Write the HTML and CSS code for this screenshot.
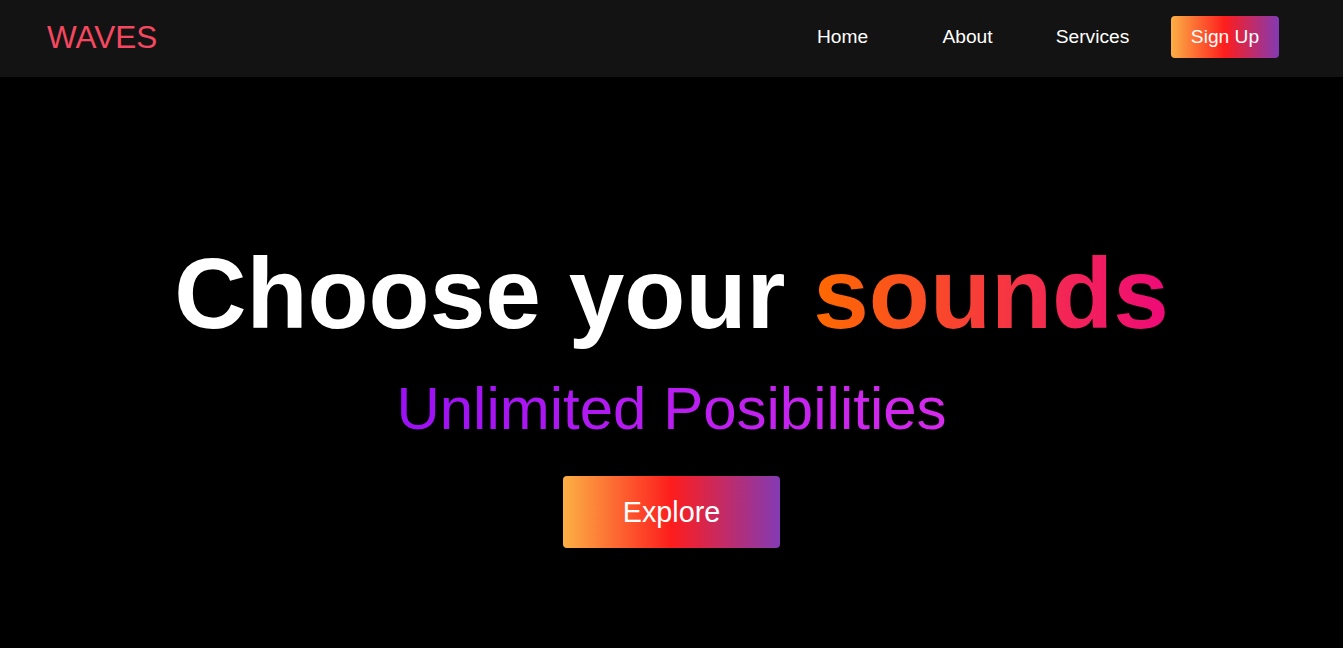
FILE: index.html
```html
<!DOCTYPE html>
<html lang="en">
<head>
<meta charset="utf-8">
<title>Waves</title>
<link rel="stylesheet" href="styles.css">
</head>
<body>
<header class="navbar">
  <div class="logo">WAVES</div>
  <nav class="nav">
    <a class="nav-link" href="#">Home</a>
    <a class="nav-link" href="#">About</a>
    <a class="nav-link" href="#">Services</a>
    <a class="btn btn-signup" href="#">Sign Up</a>
  </nav>
</header>
<main class="hero">
  <h1 class="hero-title">Choose your <span class="accent">sounds</span></h1>
  <h2 class="hero-sub">Unlimited Posibilities</h2>
  <a class="btn btn-explore" href="#">Explore</a>
</main>
</body>
</html>
```

FILE: styles.css
```css
* { box-sizing: border-box; margin: 0; padding: 0; }

html, body {
  height: 100%;
}

body {
  background: #000;
  font-family: "Liberation Sans", Arial, sans-serif;
  color: #fff;
  overflow: hidden;
}

.navbar {
  height: 77px;
  background: #131313;
  display: flex;
  align-items: center;
  justify-content: space-between;
  padding: 0 64px 0 47px;
}

.logo {
  font-size: 31.5px;
  color: #f5475f;
  padding-bottom: 2px;
}

.nav {
  display: flex;
  align-items: center;
}

.nav-link {
  width: 125px;
  text-align: center;
  color: #fff;
  text-decoration: none;
  font-size: 19.2px;
  padding-bottom: 4px;
}

.btn {
  display: flex;
  align-items: center;
  justify-content: center;
  color: #fff;
  text-decoration: none;
  background: linear-gradient(to right, #fcb045, #fd1d1d, #833ab4);
  border-radius: 4px;
}

.btn-signup {
  margin-left: 16px;
  margin-bottom: 4px;
  width: 108px;
  height: 42px;
  font-size: 19.2px;
  padding-bottom: 0;
}

.hero {
  display: flex;
  flex-direction: column;
  align-items: center;
  padding-top: 156px;
}

.hero-title {
  font-size: 100px;
  line-height: 120px;
  font-weight: 700;
  color: #fff;
}

.accent {
  background: linear-gradient(to right, #ff6a00, #ee0979);
  -webkit-background-clip: text;
  background-clip: text;
  color: transparent;
}

.hero-sub {
  margin-top: 20px;
  font-size: 60px;
  line-height: 72px;
  font-weight: 400;
  background: linear-gradient(to right, #9b10f5, #d62aec);
  -webkit-background-clip: text;
  background-clip: text;
  color: transparent;
}

.btn-explore {
  margin-top: 31px;
  width: 217px;
  height: 72px;
  font-size: 28.8px;
}
```
